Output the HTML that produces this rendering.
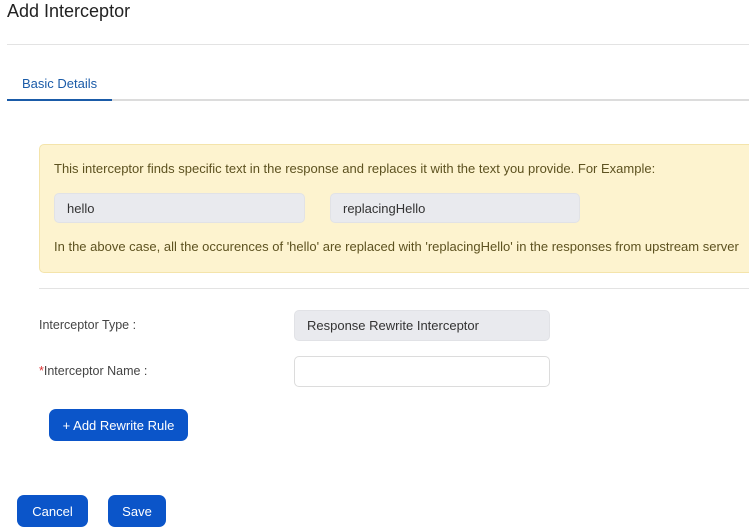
<!DOCTYPE html>
<html><head><style>
*{margin:0;padding:0;box-sizing:border-box}
body{width:749px;height:531px;overflow:hidden;background:#fff;font-family:"Liberation Sans",sans-serif;position:relative;color:#333}
.a{position:absolute}
.box{background:#e9eaee;border-radius:5px;font-size:13px;color:#333;padding-left:12px;display:flex;align-items:center;border:1px solid #e1e2e6}
.btn{background:#0b55c9;color:#fff;border-radius:7px;font-size:13px;display:flex;align-items:center;justify-content:center}
</style></head><body>
<div class="a" style="left:7px;top:1px;font-size:18px;color:#222">Add Interceptor</div>
<div class="a" style="left:7px;top:44px;width:742px;height:1px;background:#e3e3e3"></div>
<div class="a" style="left:22px;top:76px;font-size:13px;color:#1a5ba8">Basic Details</div>
<div class="a" style="left:7px;top:99px;width:742px;height:2px;background:#dcdcdc"></div>
<div class="a" style="left:7px;top:99px;width:105px;height:2px;background:#1a5ba8"></div>
<div class="a" style="left:39px;top:144px;width:720px;height:129px;background:#fdf3cf;border:1px solid #f4e4ab;border-radius:5px"></div>
<div class="a" style="left:54px;top:161px;font-size:13px;color:#5d5220;white-space:nowrap">This interceptor finds specific text in the response and replaces it with the text you provide. For Example:</div>
<div class="a box" style="left:54px;top:193px;width:251px;height:30px">hello</div>
<div class="a box" style="left:330px;top:193px;width:250px;height:30px">replacingHello</div>
<div class="a" style="left:54px;top:239px;font-size:13px;color:#5d5220;white-space:nowrap">In the above case, all the occurences of 'hello' are replaced with 'replacingHello' in the responses from upstream server</div>
<div class="a" style="left:39px;top:288px;width:710px;height:1px;background:#e3e3e3"></div>
<div class="a" style="left:39px;top:318px;font-size:12.5px;color:#444">Interceptor Type :</div>
<div class="a box" style="left:294px;top:310px;width:256px;height:31px">Response Rewrite Interceptor</div>
<div class="a" style="left:39px;top:364px;font-size:12.5px;color:#444"><span style="color:#d33">*</span>Interceptor Name :</div>
<div class="a" style="left:294px;top:356px;width:256px;height:31px;border:1px solid #dcdcdc;border-radius:5px"></div>
<div class="a btn" style="left:49px;top:409px;width:139px;height:32px">+ Add Rewrite Rule</div>
<div class="a btn" style="left:17px;top:495px;width:71px;height:32px">Cancel</div>
<div class="a btn" style="left:108px;top:495px;width:58px;height:32px">Save</div>
</body></html>
